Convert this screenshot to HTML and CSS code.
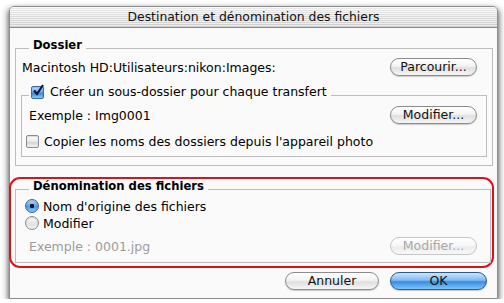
FILE: index.html
```html
<!DOCTYPE html>
<html lang="fr">
<head>
  <meta charset="UTF-8">
  <title>Destination et dénomination des fichiers</title>
  <link rel="stylesheet" href="styles.css">
</head>
<body>

<div class="window">
  <div class="titlebar">Destination et dénomination des fichiers</div>

  <div class="content">
    <fieldset class="group dossier">
      <legend class="group-title">Dossier</legend>
      <div class="row first">
        <span>Macintosh HD:Utilisateurs:nikon:Images:</span>
        <button class="btn">Parcourir...</button>
      </div>

      <fieldset class="group inner">
        <legend class="check-legend">
          <span class="checkbox checked">
            <svg width="12" height="12" viewBox="0 0 12 12"><path d="M2 6.5 L5 10 L11 1" fill="none" stroke="#0b1a3c" stroke-width="2.2"/></svg>
          </span>
          <span>Créer un sous-dossier pour chaque transfert</span>
        </legend>
        <div class="row">
          <span>Exemple : Img0001</span>
          <button class="btn">Modifier...</button>
        </div>
        <div class="row check-row">
          <span class="checkbox"></span>
          <span>Copier les noms des dossiers depuis l'appareil photo</span>
        </div>
      </fieldset>
    </fieldset>

    <div class="highlight">
      <fieldset class="group naming">
        <legend class="group-title">Dénomination des fichiers</legend>
        <div class="radio-row first">
          <span class="radio on"></span>
          <span>Nom d'origine des fichiers</span>
        </div>
        <div class="radio-row">
          <span class="radio"></span>
          <span>Modifier</span>
        </div>
        <div class="row disabled">
          <span>Exemple : 0001.jpg</span>
          <button class="btn" disabled>Modifier...</button>
        </div>
      </fieldset>
    </div>

    <div class="actions">
      <button class="btn cancel">Annuler</button>
      <button class="btn ok">OK</button>
    </div>
  </div>
</div>

</body>
</html>
```

FILE: styles.css
```css
body {
  margin: 0;
  background: #ffffff;
  font-family: "DejaVu Sans", Verdana, sans-serif;
  font-size: 12.5px;
  color: #000;
}

.window {
  margin: 6px 0 0 9px;
  width: 489px;
  height: 293px;
  box-sizing: border-box;
  background: #fafafa;
  border: 1px solid #8d8d8d;
  border-radius: 5px 5px 0 0;
  box-shadow: 0 3px 5px rgba(0, 0, 0, 0.5), -3px 2px 6px rgba(0, 0, 0, 0.22), 3px 2px 6px rgba(0, 0, 0, 0.22);
  display: flex;
  flex-direction: column;
}

/* barre de titre rayée */
.titlebar {
  height: 20px;
  line-height: 20px;
  text-align: center;
  font-size: 12.4px;
  color: #111;
  border-radius: 4px 4px 0 0;
  border-bottom: 1px solid #8a8a8a;
  background:
    repeating-linear-gradient(to bottom, rgba(255,255,255,0.55) 0 1px, rgba(0,0,0,0.035) 1px 2px),
    linear-gradient(to bottom, #f2f2f2, #d4d4d4);
}

.content {
  flex: 1;
  padding: 10px 4px 0 5px;
  display: flex;
  flex-direction: column;
}

.group {
  margin: 0;
  border: 1px solid #bdbdbd;
  min-width: 0;
}

.group-title {
  font-weight: bold;
  font-size: 11.6px;
  line-height: 14px;
  padding: 0 4px 6px;
}

.dossier {
  padding: 0 15px 8px 6px;
}

.dossier .group-title {
  margin-left: 7px;
}

.row {
  display: flex;
  align-items: center;
  justify-content: space-between;
  height: 18px;
}

.inner {
  margin: 9px -10px 0 -1px;
  padding: 1px 9px 6px 7px;
}

.check-legend {
  padding: 0 4px 6px 2px;
  line-height: 14px;
  display: flex;
  align-items: center;
  gap: 6px;
}

.check-row {
  justify-content: flex-start;
  gap: 5px;
  margin: 8px 0 0 -3px;
}

.checkbox {
  width: 11px;
  height: 11px;
  border: 1px solid #8c8c8c;
  border-radius: 2px;
  background: linear-gradient(to bottom, #ffffff, #e9e9e9 50%, #d3d3d3 55%, #f2f2f2);
  box-shadow: inset 0 1px 1px rgba(0,0,0,0.15);
  position: relative;
  flex: none;
}

.checkbox.checked {
  background: linear-gradient(to bottom, #c4e2fb, #5aa4e8 50%, #2f84da 55%, #8ccaf7);
  border-color: #3a68a0;
}

.checkbox svg {
  position: absolute;
  left: 0;
  top: -3px;
}

/* boutons Aqua */
.btn {
  font-family: inherit;
  font-size: 12.5px;
  width: 87px;
  height: 18px;
  padding: 0 0 1px;
  border: 1px solid #8c8c8c;
  border-radius: 9px;
  color: #111;
  background: linear-gradient(to bottom, #ffffff 0%, #f3f3f3 45%, #dfdfdf 55%, #f6f6f6 100%);
  box-shadow: 0 1px 1px rgba(0,0,0,0.2);
}

.btn:disabled {
  color: #a8a8a8;
  border-color: #c6c6c6;
  box-shadow: none;
  background: linear-gradient(to bottom, #ffffff, #f6f6f6 50%, #ececec 55%, #f8f8f8);
}

.btn.cancel {
  width: 94px;
}

.btn.ok {
  width: 97px;
  border-color: #2a5a96;
  background: linear-gradient(to bottom, #cfe6fc 0%, #7fbaf2 45%, #3a8ce0 55%, #7cc6f9 100%);
}

.highlight {
  margin: 11px 0 0 -6px;
  width: 485px;
  box-sizing: border-box;
  padding: 0 1px 3px 4px;
  border: 2px solid #e0101a;
  border-radius: 11px;
}

.naming {
  padding: 0 13px 7px 9px;
}

.naming .group-title {
  margin-left: 4px;
}

.radio-row {
  display: flex;
  align-items: center;
  gap: 4px;
  height: 16px;
  margin-top: 1px;
}

.radio-row.first {
  margin-top: -1px;
}

.radio {
  width: 12px;
  height: 12px;
  border: 1px solid #8c8c8c;
  border-radius: 50%;
  background: linear-gradient(to bottom, #fdfdfd, #e2e2e2 60%, #f3f3f3);
  box-shadow: inset 0 1px 1px rgba(0,0,0,0.15);
  flex: none;
}

.radio.on {
  border-color: #3a68a0;
  background: radial-gradient(circle at 50% 50%, #0c1830 0 2px, transparent 2.5px),
    linear-gradient(to bottom, #c6e2fb, #4e9ae4 55%, #8ac8f7);
}

.disabled {
  color: #9c9c9c;
  margin: 6px 0 0 4px;
}

.actions {
  display: flex;
  justify-content: flex-end;
  gap: 11px;
  margin-top: 4px;
  padding-right: 6px;
}
```
